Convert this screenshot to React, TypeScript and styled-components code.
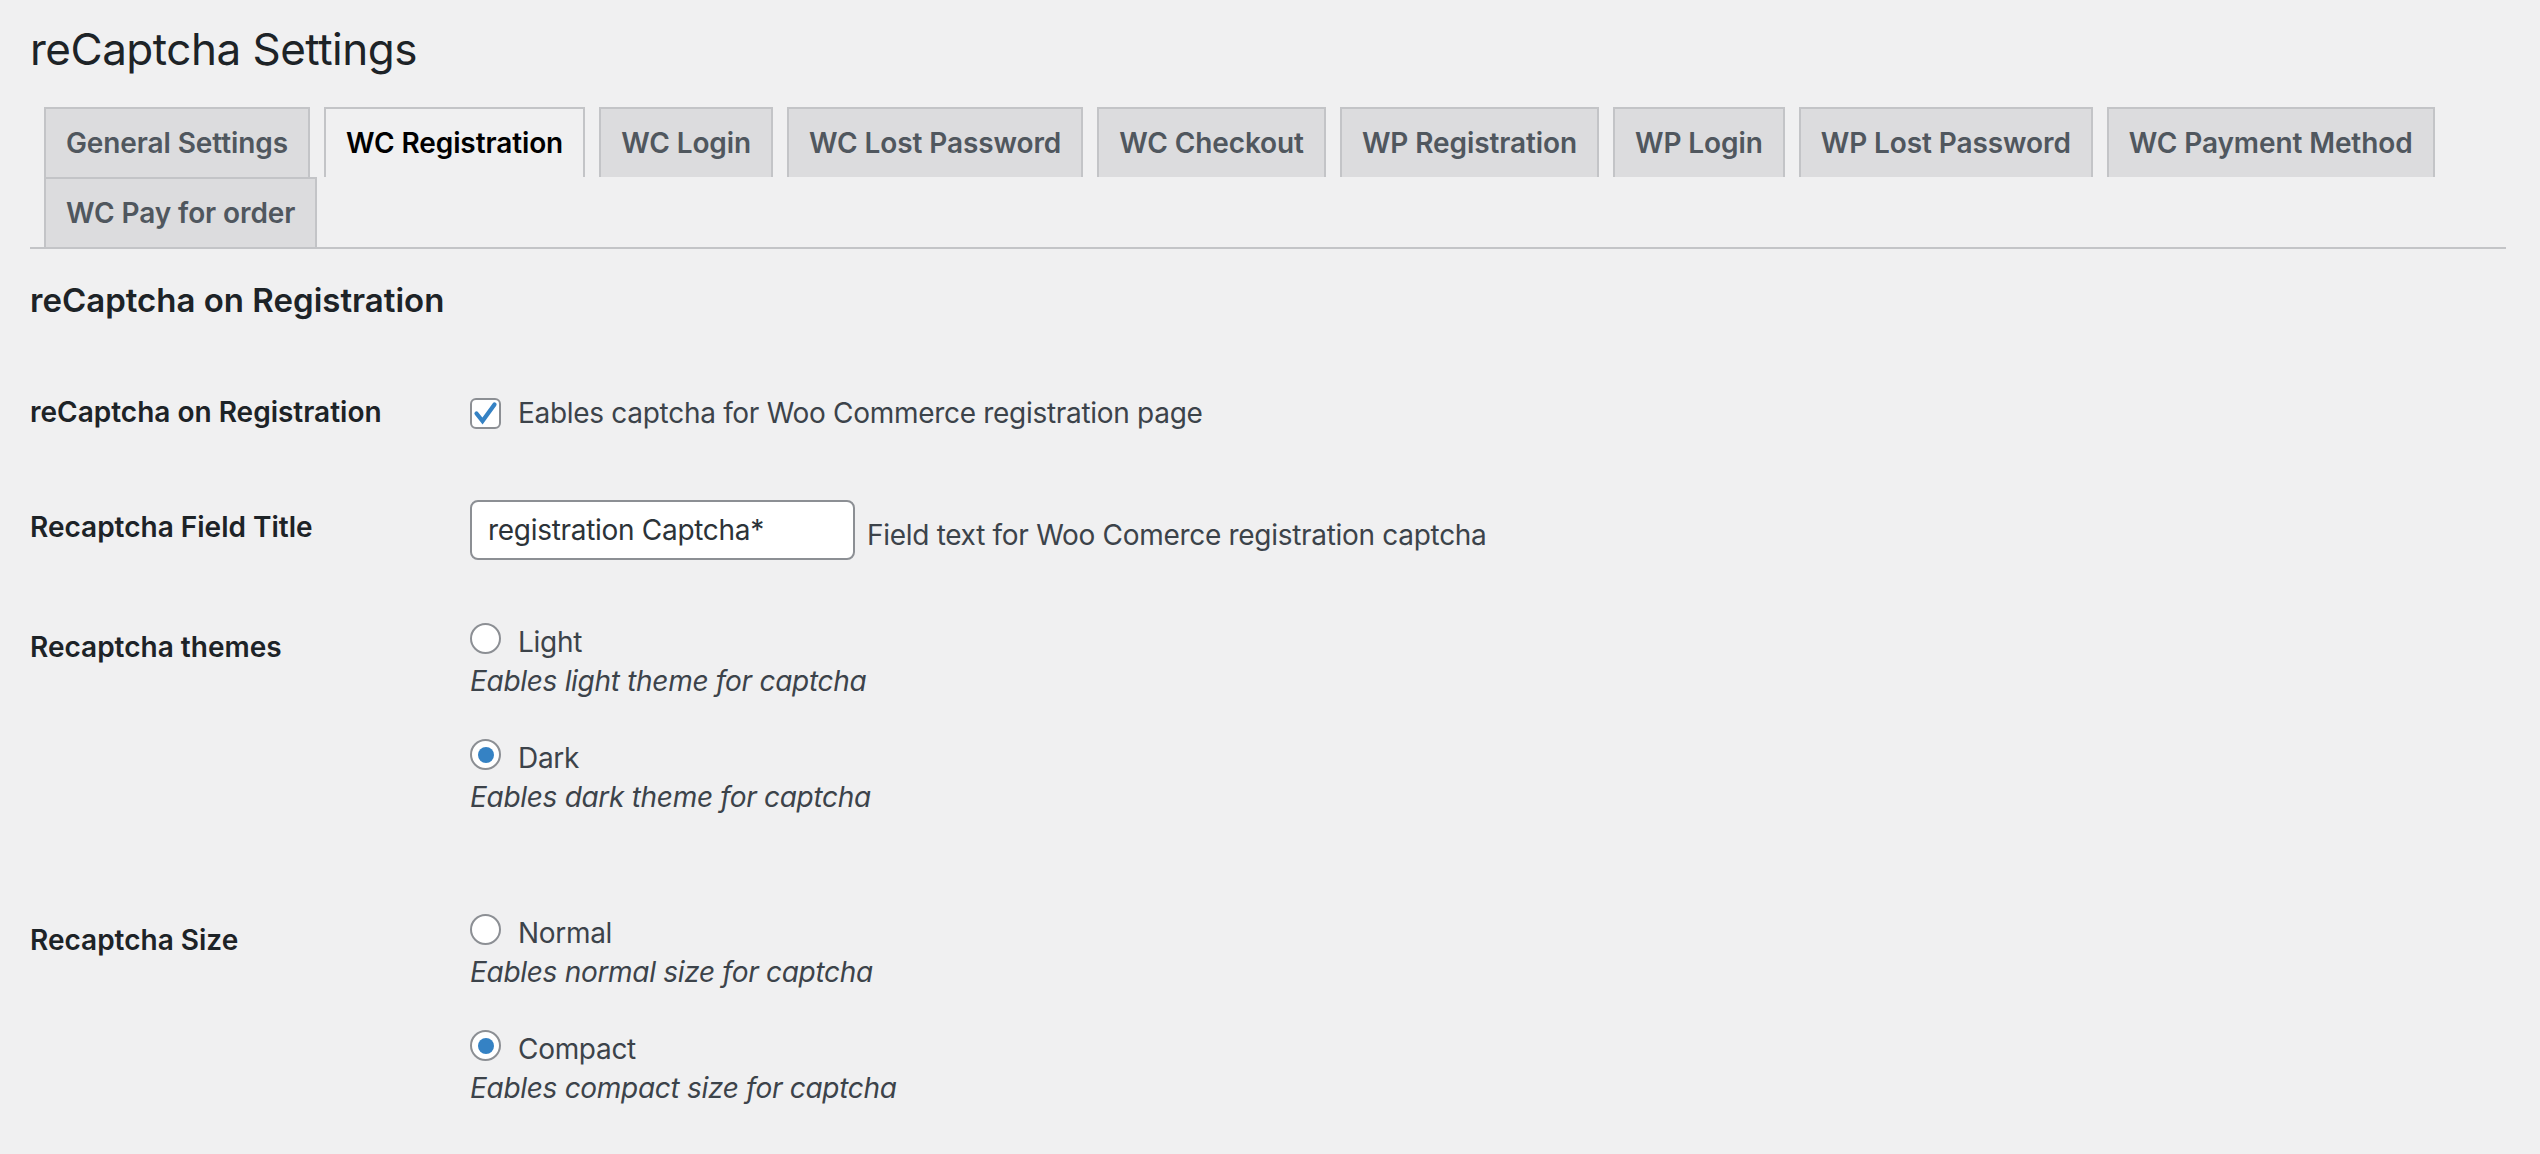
import * as React from 'react'
import styled, {createGlobalStyle} from 'styled-components'

const GlobalStyle = createGlobalStyle`
  html, body {
    margin: 0;
    padding: 0;
    background: #f0f0f1;
  }
  body {
    font-family: Inter, "Noto Sans", "Liberation Sans", sans-serif;
    color: #3c434a;
    -webkit-font-smoothing: antialiased;
  }
`

const Wrap = styled.div`
  padding: 0 34px 0 30px;
`

const PageTitle = styled.h1`
  margin: 0 0 10px;
  padding-top: 19px;
  font-size: 44px;
  line-height: 60px;
  font-weight: 400;
  letter-spacing: -0.5px;
  color: #1d2327;
`

const TabWrapper = styled.nav`
  display: flex;
  flex-wrap: wrap;
  padding-top: 18px;
  border-bottom: 2px solid #c3c4c7;
`

const Tab = styled.a<{$active?: boolean}>`
  margin-left: 14px;
  padding: 10px 20px;
  font-size: 28px;
  line-height: 48px;
  font-weight: 600;
  letter-spacing: -0.1px;
  white-space: nowrap;
  text-decoration: none;
  border: 2px solid #c3c4c7;
  border-bottom: none;
  background: ${p => (p.$active ? '#f0f0f1' : '#dcdcde')};
  color: ${p => (p.$active ? '#000' : '#50575e')};
  cursor: pointer;
`

const SectionTitle = styled.h2`
  margin: 30px 0 33px;
  font-size: 33px;
  line-height: 43px;
  font-weight: 600;
  color: #1d2327;
`

const FormTable = styled.div`
  display: flex;
  flex-direction: column;
`

const Row = styled.div`
  display: grid;
  grid-template-columns: 420px 1fr;
  align-items: start;
`

const Th = styled.div`
  padding: 40px 20px 40px 0;
  font-size: 28px;
  line-height: 35px;
  font-weight: 600;
  color: #1d2327;
`

const Td = styled.div<{$pt: number; $pb: number}>`
  padding: ${p => p.$pt}px 20px ${p => p.$pb}px;
  font-size: 28px;
  letter-spacing: -0.3px;
  color: #3c434a;
`

const CheckLine = styled.label`
  display: flex;
  align-items: center;
  gap: 17px;
  height: 36px;
  line-height: 36px;
`

const CheckBox = styled.span`
  display: inline-flex;
  width: 31px;
  height: 31px;
  box-sizing: border-box;
  border: 2px solid #8c8f94;
  border-radius: 6px;
  background: #fff;
  svg {
    width: 100%;
    height: 100%;
  }
`

const FieldLine = styled.div`
  display: flex;
  align-items: center;
  gap: 12px;
`

const TextInput = styled.input`
  width: 385px;
  height: 60px;
  box-sizing: border-box;
  padding: 0 16px;
  border: 2px solid #8c8f94;
  border-radius: 8px;
  background: #fff;
  font-family: inherit;
  font-size: 28px;
  letter-spacing: -0.3px;
  color: #2c3338;
  outline: none;
`

const InlineNote = styled.span`
  margin-top: 10px;
  line-height: 36px;
`

const RadioLine = styled.label`
  display: flex;
  align-items: flex-start;
  gap: 17px;
  height: 39px;
  line-height: 39px;
`

const Radio = styled.span<{$checked?: boolean}>`
  display: inline-flex;
  align-items: center;
  justify-content: center;
  width: 31px;
  height: 31px;
  box-sizing: border-box;
  border: 2px solid #8c8f94;
  border-radius: 50%;
  background: #fff;
  &::before {
    content: '';
    width: 16px;
    height: 16px;
    border-radius: 50%;
    background: ${p => (p.$checked ? '#3582c4' : 'transparent')};
  }
`

const Description = styled.p`
  margin: 0;
  line-height: 39px;
  font-style: italic;
  color: #3c434a;
`

const Spacer = styled.div`
  height: 38px;
`

const tabs = [
  'General Settings',
  'WC Registration',
  'WC Login',
  'WC Lost Password',
  'WC Checkout',
  'WP Registration',
  'WP Login',
  'WP Lost Password',
  'WC Payment Method',
  'WC Pay for order',
]

type Option = {label: string; note: string; checked?: boolean}

const RadioGroup = ({options}: {options: Option[]}) =>
  <>
    {options.map((o, i) =>
      <React.Fragment key={o.label}>
        {i > 0 && <Spacer />}
        <RadioLine>
          <Radio $checked={o.checked} />
          {o.label}
        </RadioLine>
        <Description>{o.note}</Description>
      </React.Fragment>
    )}
  </>

export default function App() {
  return (
    <Wrap>
      <GlobalStyle />
      <PageTitle>reCaptcha Settings</PageTitle>
      <TabWrapper>
        {tabs.map(t => <Tab key={t} $active={t === 'WC Registration'}>{t}</Tab>)}
      </TabWrapper>

      <SectionTitle>reCaptcha on Registration</SectionTitle>

      <FormTable>
        <Row>
          <Th>reCaptcha on Registration</Th>
          <Td $pt={40} $pb={30}>
            <CheckLine>
              <CheckBox>
                <svg viewBox="0 0 27 27">
                  <path d="M4.5 13.5 L10.5 21 L22.5 4.5" fill="none" stroke="#3582c4" strokeWidth="4.2" strokeLinecap="round" strokeLinejoin="miter" />
                </svg>
              </CheckBox>
              Eables captcha for Woo Commerce registration page
            </CheckLine>
          </Td>
        </Row>

        <Row>
          <Th>Recaptcha Field Title</Th>
          <Td $pt={30} $pb={30}>
            <FieldLine>
              <TextInput defaultValue="registration Captcha*" />
              <InlineNote>Field text for Woo Comerce registration captcha</InlineNote>
            </FieldLine>
          </Td>
        </Row>

        <Row>
          <Th>Recaptcha themes</Th>
          <Td $pt={33} $pb={66}>
            <RadioGroup options={[
              {label: 'Light', note: 'Eables light theme for captcha'},
              {label: 'Dark', note: 'Eables dark theme for captcha', checked: true},
            ]} />
          </Td>
        </Row>

        <Row>
          <Th>Recaptcha Size</Th>
          <Td $pt={31} $pb={30}>
            <RadioGroup options={[
              {label: 'Normal', note: 'Eables normal size for captcha'},
              {label: 'Compact', note: 'Eables compact size for captcha', checked: true},
            ]} />
          </Td>
        </Row>
      </FormTable>
    </Wrap>
  )
}
